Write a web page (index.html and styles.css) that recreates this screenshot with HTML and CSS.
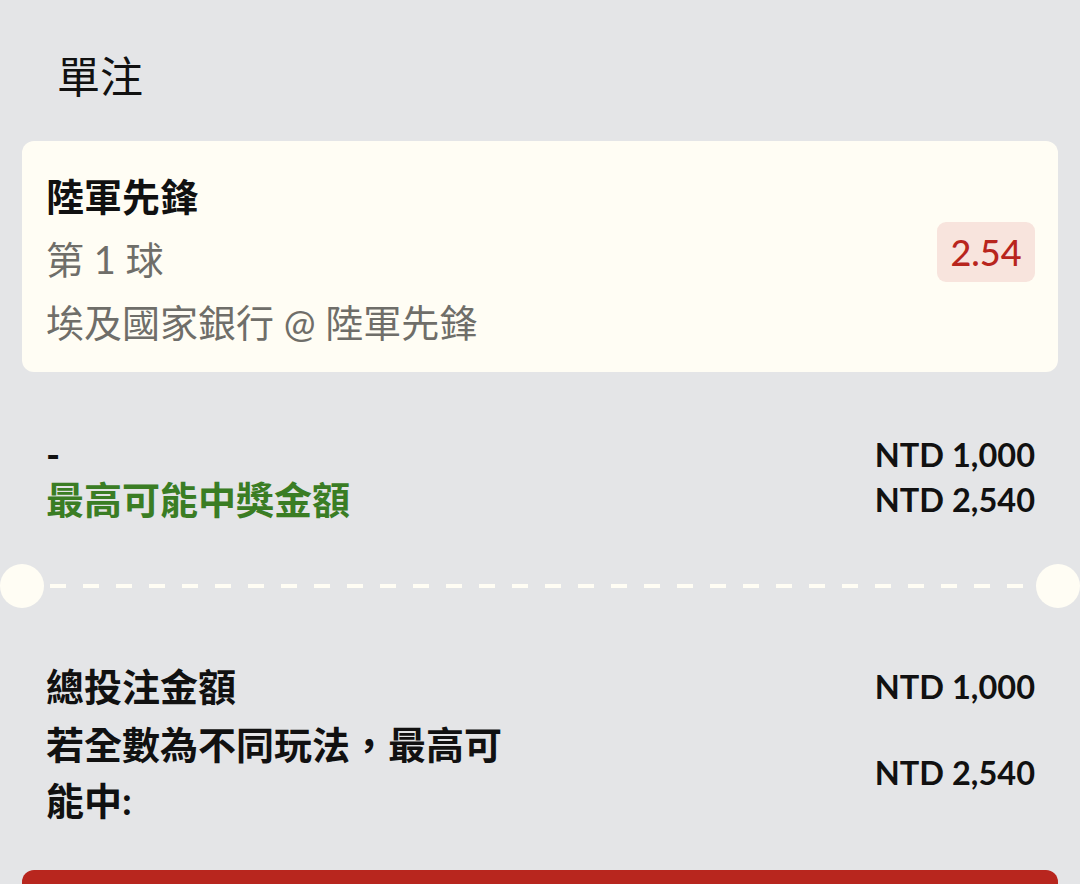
FILE: index.html
```html
<!DOCTYPE html>
<html lang="zh-Hant">
<head>
<meta charset="utf-8">
<title>單注</title>
<link rel="stylesheet" href="styles.css">
</head>
<body>
<div class="page">
  <div class="header">單注</div>

  <div class="card">
    <div class="card-info">
      <div class="team">陸軍先鋒</div>
      <div class="sub">第 1 球</div>
      <div class="sub">埃及國家銀行 @ 陸軍先鋒</div>
    </div>
    <div class="odds">2.54</div>
  </div>

  <div class="summary">
    <div class="row">
      <div class="label dash">-</div>
      <div class="amount">NTD 1,000</div>
    </div>
    <div class="row">
      <div class="label win">最高可能中獎金額</div>
      <div class="amount">NTD 2,540</div>
    </div>
  </div>

  <div class="divider">
    <span class="notch"></span>
    <span class="dashes"></span>
    <span class="notch"></span>
  </div>

  <div class="totals">
    <div class="row total-row">
      <div class="label">總投注金額</div>
      <div class="amount">NTD 1,000</div>
    </div>
    <div class="row total-row">
      <div class="label wrap">若全數為不同玩法，最高可能中:</div>
      <div class="amount">NTD 2,540</div>
    </div>
  </div>

  <div class="button"></div>
</div>
</body>
</html>
```

FILE: styles.css
```css
* { box-sizing: border-box; }

html, body {
  margin: 0;
  padding: 0;
}

body {
  background: #e4e5e7;
  font-family: Lato, "Noto Sans CJK TC", "Noto Sans", sans-serif;
  color: #111111;
  width: 1080px;
  height: 884px;
  overflow: hidden;
}

.page {
  display: flex;
  flex-direction: column;
}

.header {
  padding: 52px 0 0 57px;
  font-size: 43px;
  line-height: 50px;
  font-weight: 400;
  color: #111;
  height: 141px;
}

.card {
  margin: 0 22px;
  height: 231px;
  background: #fffdf4;
  border-radius: 12px;
  padding: 24px 23px 0 24px;
  display: flex;
  justify-content: space-between;
  align-items: center;
}

.card-info {
  align-self: flex-start;
  display: flex;
  flex-direction: column;
}

.team {
  font-size: 38px;
  line-height: 63px;
  font-weight: 700;
  color: #111;
}

.sub {
  font-size: 38px;
  line-height: 63px;
  font-weight: 400;
  color: #6f6e69;
}

.odds {
  margin-bottom: 33px;
  height: 60px;
  width: 98px;
  border-radius: 9px;
  background: #f8e4dd;
  color: #b8251d;
  font-size: 36px;
  font-weight: 500;
  display: flex;
  align-items: center;
  justify-content: center;
}

.summary {
  margin-top: 60px;
  padding: 0 45px 0 46px;
  display: flex;
  flex-direction: column;
}

.row {
  display: flex;
  justify-content: space-between;
  align-items: center;
}

.summary .row {
  height: 45px;
}

.label {
  font-size: 38px;
  font-weight: 700;
  color: #111;
}

.dash {
  line-height: 45px;
}

.win {
  color: #3a7d24;
  line-height: 45px;
}

.amount {
  font-size: 32.5px;
  font-weight: 700;
  color: #111;
}

.divider {
  margin-top: 42px;
  height: 44px;
  display: flex;
  align-items: center;
}

.notch {
  width: 44px;
  height: 44px;
  border-radius: 50%;
  background: #fffdf4;
  flex: none;
}

.dashes {
  flex: 1;
  height: 4px;
  margin: 0 5px 0 6px;
  background-image: repeating-linear-gradient(
    to right,
    #fffdf4 0,
    #fffdf4 16px,
    transparent 16px,
    transparent 33px
  );
}

.totals {
  margin-top: 50px;
  padding: 0 45px 0 46px;
  display: flex;
  flex-direction: column;
  gap: 2px;
}

.total-row .label {
  line-height: 56px;
}

.wrap {
  max-width: 480px;
}

.button {
  margin: 42px 22px 0;
  height: 14px;
  background: #b8261e;
  border-radius: 12px 12px 0 0;
}
```
